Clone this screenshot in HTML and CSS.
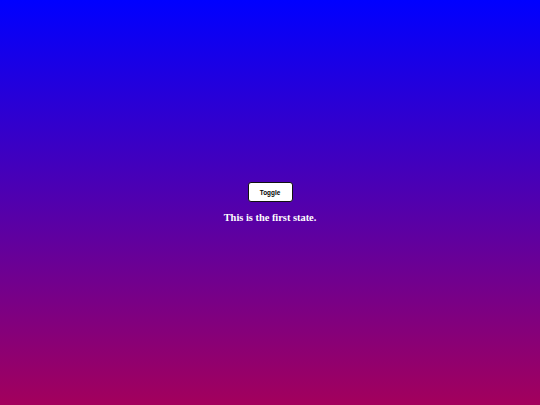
FILE: index.html
```html
<!DOCTYPE html>
<html>
<head>
<meta charset="utf-8">
<link rel="stylesheet" href="styles.css">
</head>
<body>
<main class="stage">
  <button class="toggle">Toggle</button>
  <p class="state">This is the first state.</p>
</main>
</body>
</html>
```
FILE: styles.css
```css
html, body {
  margin: 0;
  height: 100%;
}
body {
  background: linear-gradient(to bottom, #0000ff 0%, #a3005c 100%);
  font-family: "Liberation Serif", serif;
}
.stage {
  height: 100%;
  display: flex;
  flex-direction: column;
  align-items: center;
  justify-content: center;
  gap: 10px;
}
.toggle {
  width: 45px;
  height: 20px;
  padding: 0;
  background: #fff;
  border: 1px solid #111;
  border-radius: 3px;
  font-family: "Liberation Sans", Arial, sans-serif;
  font-weight: bold;
  font-size: 6.4px;
  color: #000;
}
.state {
  margin: 0;
  color: #fff;
  font-weight: bold;
  font-size: 10.4px;
}
```
